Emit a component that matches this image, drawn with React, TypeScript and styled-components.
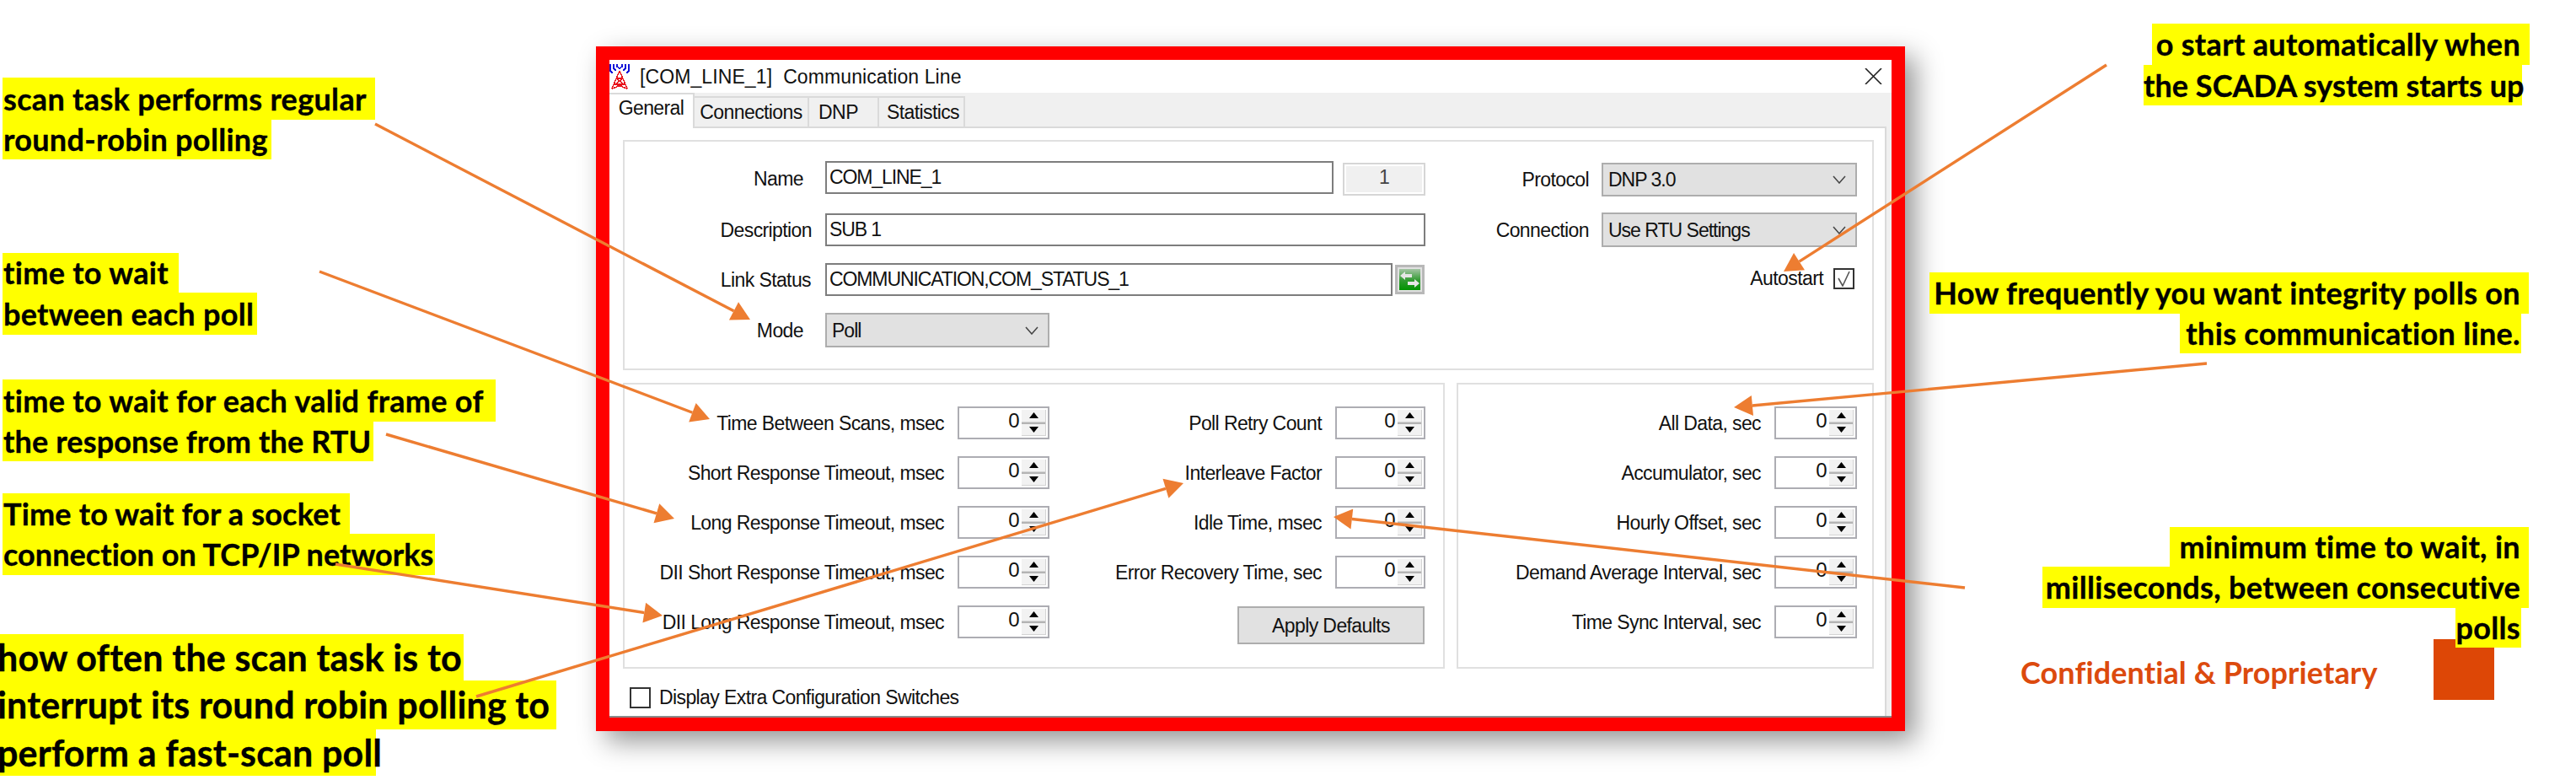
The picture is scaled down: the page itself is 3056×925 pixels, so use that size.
import React from 'react';
import styled, {createGlobalStyle} from 'styled-components';

const GlobalStyle = createGlobalStyle`
  html, body { margin: 0; padding: 0; background: #fff; }
  #root { width: 3056px; height: 925px; }
`;

const Slide = styled.div`
  position: relative;
  width: 3056px;
  height: 925px;
  overflow: hidden;
  background: #fff;
  display: grid;
  grid-template-columns: 707px 1553px 796px;
`;

const NotesColumn = styled.div<{$side: 'left' | 'right'}>`
  position: relative;
  display: flex;
  flex-direction: column;
  align-items: ${p => (p.$side === 'left' ? 'flex-start' : 'flex-end')};
  padding-right: ${p => (p.$side === 'left' ? 0 : 55)}px;
`;

const Note = styled.div<{$top: number}>`
  position: relative;
  z-index: 1;
  margin-top: ${p => p.$top}px;
  display: flex;
  flex-direction: column;
  align-items: inherit;
  align-self: stretch;
`;

const NoteLine = styled.div<{$w: number; $h: number; $side: 'left' | 'right'; $size: number; $pad: number; $inset?: number; $track: number}>`
  box-sizing: border-box;
  width: ${p => p.$w}px;
  height: ${p => p.$h}px;
  margin-left: ${p => (p.$side === 'left' ? p.$inset ?? 3 : 0)}px;
  margin-right: ${p => (p.$side === 'right' ? p.$inset ?? 0 : 0)}px;
  text-indent: ${p => (p.$side === 'left' ? p.$pad : 0)}px;
  padding-right: ${p => (p.$side === 'right' ? p.$pad : 0)}px;
  background: #ffff00;
  color: #000;
  font: 700 ${p => p.$size}px/${p => p.$h}px Lato, "Liberation Sans", sans-serif;
  letter-spacing: ${p => p.$track}px;
  -webkit-text-stroke: 0.35px #000;
  text-align: ${p => p.$side};
  white-space: nowrap;
`;

const Footer = styled.div`
  align-self: flex-start;
  margin: 9px 0 0 137px;
  color: #dc4a0e;
  font: 700 36px/40px Lato, "Liberation Sans", sans-serif;
  letter-spacing: 0.1px;
  white-space: nowrap;
`;

const Square = styled.div`
  position: absolute;
  left: 627px;
  top: 758px;
  width: 72px;
  height: 72px;
  background: #dd4706;
`;

const Dialog = styled.div`
  box-sizing: border-box;
  margin-top: 55px;
  width: 1553px;
  height: 812px;
  border: 16px solid #ff0000;
  background: #f0f0f0;
  box-shadow: 12px 12px 30px rgba(0, 0, 0, 0.42);
  display: flex;
  flex-direction: column;
  color: #111;
  font: 400 23px/26px "Liberation Sans", Arial, sans-serif;
  letter-spacing: -0.6px;
  white-space: nowrap;
`;

const TitleBar = styled.div`
  flex: none;
  height: 39px;
  background: #fff;
  display: flex;
  align-items: center;
  position: relative;
`;

const TitleText = styled.span`
  margin-left: 12px;
  white-space: pre;
  letter-spacing: 0.1px;
`;

const CloseIcon = styled.svg`
  margin-left: auto;
  margin-right: 11px;
  width: 21px;
  height: 19px;
`;

const TabStrip = styled.div`
  flex: none;
  height: 40px;
  display: flex;
  align-items: flex-end;
`;

const Tab = styled.div<{$active?: boolean; $w: number; $nudge?: number}>`
  box-sizing: border-box;
  width: ${p => p.$w}px;
  height: ${p => (p.$active ? 42 : 36)}px;
  margin-bottom: ${p => (p.$active ? -2 : 0)}px;
  padding-bottom: ${p => (p.$active ? 8 : 0)}px;
  padding-left: ${p => (p.$nudge && p.$nudge > 0 ? p.$nudge : 0)}px;
  padding-right: ${p => (p.$nudge && p.$nudge < 0 ? -p.$nudge : 0)}px;
  position: relative;
  z-index: ${p => (p.$active ? 2 : 0)};
  display: flex;
  align-items: center;
  justify-content: center;
  background: ${p => (p.$active ? '#fff' : '#f0f0f0')};
  border-top: 2px solid #dadada;
  border-right: 2px solid #dadada;
`;

const TabPanel = styled.div`
  box-sizing: border-box;
  flex: 1;
  width: 1515px;
  background: #fff;
  border-top: 2px solid #dadada;
  border-right: 2px solid #dadada;
  padding: 14px 13px 0 16px;
  display: flex;
  flex-direction: column;
  gap: 15px;
  position: relative;
`;

const BottomEdge = styled.div`
  flex: none;
  height: 2px;
  background: #8a8a8a;
`;

const Group = styled.div`
  box-sizing: border-box;
  border: 2px solid #e0e0e0;
`;

const GeneralGroup = styled(Group)`
  height: 273px;
  padding: 23px 18px 0 0;
  display: flex;
`;

const FieldStack = styled.div`
  width: 950px;
  flex: none;
  display: flex;
  flex-direction: column;
`;

const FieldRow = styled.div<{$top?: number}>`
  display: flex;
  margin-top: ${p => p.$top ?? 0}px;
`;

const FieldLabel = styled.div<{$offset: number}>`
  box-sizing: border-box;
  width: 238px;
  padding-right: ${p => p.$offset}px;
  text-align: right;
  align-self: center;
`;

const TextField = styled.div<{$w: number}>`
  box-sizing: border-box;
  width: ${p => p.$w}px;
  height: 39px;
  border: 2px solid #7d7d7d;
  background: #fff;
  padding: 4px 3px 0;
  letter-spacing: -1.1px;
`;

const IdBox = styled.div`
  box-sizing: border-box;
  width: 98px;
  height: 39px;
  margin: 2px 0 0 11px;
  border: 2px solid #d6d6d6;
  outline: 2px solid #fff;
  outline-offset: -4px;
  background: #f0f0f0;
  color: #444;
  text-align: center;
  line-height: 30px;
`;

const LinkButton = styled.div`
  box-sizing: border-box;
  width: 35px;
  height: 35px;
  margin: 2px 0 0 3px;
  border: 3px solid #b8b8b8;
  background: #e1e1e1;
  padding: 2px;
  display: flex;
`;

const LinkIcon = styled.svg`
  width: 25px;
  height: 25px;
`;

const Combo = styled.div<{$w: number; $h?: number}>`
  box-sizing: border-box;
  width: ${p => p.$w}px;
  height: ${p => p.$h ?? 41}px;
  border: 2px solid #adadad;
  background: #e1e1e1;
  padding: 0 11px 0 6px;
  display: flex;
  align-items: center;
  justify-content: space-between;
  letter-spacing: -1px;
`;

const Chevron = styled.svg`
  width: 16px;
  height: 10px;
`;

const SideStack = styled.div`
  flex: 1;
  padding-top: 2px;
  display: flex;
  flex-direction: column;
  align-items: flex-end;
`;

const SideRow = styled.div<{$top?: number; $right?: number; $gap?: number}>`
  display: flex;
  align-items: center;
  gap: ${p => p.$gap ?? 15}px;
  margin-top: ${p => p.$top ?? 0}px;
  margin-right: ${p => p.$right ?? 0}px;
`;

const CheckBox = styled.div`
  box-sizing: border-box;
  width: 25px;
  height: 25px;
  border: 2px solid #333;
  background: #fff;
  display: flex;
  align-items: center;
  justify-content: center;
`;

const TimingRow = styled.div`
  display: flex;
  gap: 14px;
  height: 339px;
`;

const TimingGroup = styled(Group)<{$w: number; $right: number}>`
  flex: none;
  width: ${p => p.$w}px;
  padding: 26px ${p => p.$right}px 0 0;
  display: flex;
`;

const SpinColumn = styled.div<{$w?: number}>`
  ${p => (p.$w ? `width: ${p.$w}px; flex: none;` : 'flex: 1;')}
  display: flex;
  flex-direction: column;
  align-items: flex-end;
  gap: 20px;
`;

const SpinRow = styled.div`
  height: 39px;
  display: flex;
  align-items: center;
  gap: 16px;
`;

const Spin = styled.div<{$w: number}>`
  box-sizing: border-box;
  width: ${p => p.$w}px;
  height: 39px;
  border: 2px solid #adadb3;
  background: #fff;
  display: flex;
  padding: 2px;
`;

const SpinValue = styled.div`
  flex: 1;
  text-align: right;
  padding-right: 3px;
  line-height: 26px;
  font-size: 24px;
`;

const SpinButtons = styled.div`
  width: 28px;
  display: flex;
  flex-direction: column;
  gap: 2px;
  background: #b4b4b4;
  border-right: 1px solid #d4d4d4;
`;

const SpinButton = styled.div`
  flex: 1;
  background: #f2f2f2;
  border-bottom: 1px solid #d4d4d4;
  display: flex;
  align-items: center;
  justify-content: center;
`;

const Triangle = styled.svg`
  width: 11px;
  height: 7px;
`;

const ApplyButton = styled.div`
  box-sizing: border-box;
  width: 222px;
  height: 45px;
  margin: 1px 1px 0 0;
  border: 2px solid #adadad;
  background: #e1e1e1;
  display: flex;
  align-items: center;
  justify-content: center;
`;

const ExtraRow = styled.div`
  margin: 6px 0 0 8px;
  display: flex;
  align-items: center;
  gap: 10px;
`;

const Overlay = styled.svg`
  position: absolute;
  left: 0;
  top: 0;
  z-index: 5;
  pointer-events: none;
`;

type NoteLineData = {text: string; w: number; h: number; pad: number; inset?: number; track?: number};
type NoteData = {top: number; size: number; track: number; lines: NoteLineData[]};

const leftNotes: NoteData[] = [
  {top: 92, size: 36, track: 0.32, lines: [
    {text: 'scan task performs regular', w: 442, h: 50, pad: 1},
    {text: 'round-robin polling', w: 319, h: 47, pad: 1},
  ]},
  {top: 111, size: 36, track: 0.32, lines: [
    {text: 'time to wait', w: 209, h: 47, pad: 1},
    {text: 'between each poll', w: 302, h: 50, pad: 1},
  ]},
  {top: 53, size: 36, track: 0.32, lines: [
    {text: 'time to wait for each valid frame of', w: 585, h: 50, pad: 1},
    {text: 'the response from the RTU', w: 440, h: 47, pad: 1, track: 0.15},
  ]},
  {top: 38, size: 36, track: 0.2, lines: [
    {text: 'Time to wait for a socket', w: 412, h: 48, pad: 1},
    {text: 'connection on TCP/IP networks', w: 513, h: 49, pad: 1, track: 0.05},
  ]},
  {top: 70, size: 43, track: 0.15, lines: [
    {text: 'how often the scan task is to', w: 550, h: 55, pad: -3, inset: 0},
    {text: 'interrupt its round robin polling to', w: 660, h: 58, pad: -3, inset: 0},
    {text: 'perform a fast-scan poll', w: 446, h: 55, pad: -3, inset: 0},
  ]},
];

const rightNotes: NoteData[] = [
  {top: 28, size: 36, track: 0.32, lines: [
    {text: 'o start automatically when', w: 448, h: 49, pad: 11},
    {text: 'the SCADA system starts up', w: 449, h: 48, pad: 2, inset: 9, track: 0.05},
  ]},
  {top: 198, size: 36, track: 0.32, lines: [
    {text: 'How frequently you want integrity polls on', w: 711, h: 49, pad: 10, inset: 1},
    {text: 'this communication line.', w: 405, h: 47, pad: 1, inset: 10},
  ]},
  {top: 206, size: 36, track: 0.32, lines: [
    {text: 'minimum time to wait, in', w: 426, h: 47, pad: 10, inset: 1},
    {text: 'milliseconds, between consecutive', w: 577, h: 49, pad: 10, inset: 1},
    {text: 'polls', w: 78, h: 47, pad: 1, inset: 10},
  ]},
];

const tabs = [
  {label: 'General', w: 101, active: true},
  {label: 'Connections', w: 136},
  {label: 'DNP', w: 83, nudge: -12},
  {label: 'Statistics', w: 102, nudge: 4},
];

const scanLabels = ['Time Between Scans, msec', 'Short Response Timeout, msec', 'Long Response Timeout, msec', 'DII Short Response Timeout, msec', 'DII Long Response Timeout, msec'];
const pollLabels = ['Poll Retry Count', 'Interleave Factor', 'Idle Time, msec', 'Error Recovery Time, sec'];
const integrityLabels = ['All Data, sec', 'Accumulator, sec', 'Hourly Offset, sec', 'Demand Average Interval, sec', 'Time Sync Interval, sec'];

const arrows = [
  [445, 147, 890, 379],
  [379, 322, 842, 497],
  [458, 515, 800, 615],
  [398, 669, 786, 730],
  [565, 826, 1404, 573],
  [2499, 77, 2116, 322],
  [2618, 431, 2057, 483],
  [2331, 697, 1582, 613],
];

const Arrow: React.FC<{x1: number; y1: number; x2: number; y2: number}> = ({x1, y1, x2, y2}) => {
  const len = Math.hypot(x2 - x1, y2 - y1);
  const ux = (x2 - x1) / len;
  const uy = (y2 - y1) / len;
  const bx = x2 - ux * 22;
  const by = y2 - uy * 22;
  const px = -uy * 12;
  const py = ux * 12;
  return (
    <g>
      <line x1={x1} y1={y1} x2={bx} y2={by} stroke="#ed7d31" strokeWidth={3.4} />
      <polygon points={`${x2},${y2} ${bx + px},${by + py} ${bx - px},${by - py}`} fill="#ed7d31" />
    </g>
  );
};

// blue signal arcs over a red lattice mast
const AntennaIcon = () => (
  <svg width="24" height="30" viewBox="0 0 24 30" shapeRendering="crispEdges" fill="none">
    <path d="M1 0v8l3 3M23 0v8l-3 3M5 0v5l3 3M19 0v5l-3 3M9 0v3l3 2 3-2V0" stroke="#1414d8" strokeWidth="1.5" />
    <path d="M12 8L3 29M12 8l9 21M8 17h8M5 24h14M8 17l9 7M16 17L7 24M3 29l14-5M21 29L7 24" stroke="#e8141c" strokeWidth="1.5" />
  </svg>
);

const ComboArrow = () => (
  <Chevron viewBox="0 0 16 10" fill="none">
    <path d="M1 1l7 8 7-8" stroke="#444" strokeWidth="1.5" />
  </Chevron>
);

const SpinBox: React.FC<{w: number}> = ({w}) => (
  <Spin $w={w}>
    <SpinValue>0</SpinValue>
    <SpinButtons>
      <SpinButton>
        <Triangle viewBox="0 0 11 7"><path d="M5.5 0L11 7H0z" fill="#000" /></Triangle>
      </SpinButton>
      <SpinButton>
        <Triangle viewBox="0 0 11 7"><path d="M0 0h11L5.5 7z" fill="#000" /></Triangle>
      </SpinButton>
    </SpinButtons>
  </Spin>
);

const renderNotes = (notes: NoteData[], side: 'left' | 'right') =>
  notes.map(note => (
    <Note key={note.lines[0].text} $top={note.top}>
      {note.lines.map(line => (
        <NoteLine
          key={line.text}
          $side={side}
          $w={line.w}
          $h={line.h}
          $pad={line.pad}
          $inset={side === 'right' ? line.inset ?? 0 : line.inset}
          $size={note.size}
          $track={line.track ?? note.track}
        >
          {line.text}
        </NoteLine>
      ))}
    </Note>
  ));

export default function App() {
  return (
    <>
      <GlobalStyle />
      <Slide>
        <NotesColumn $side="left">{renderNotes(leftNotes, 'left')}</NotesColumn>

        <Dialog>
          <TitleBar>
            <AntennaIcon />
            <TitleText>{'[COM_LINE_1]  Communication Line'}</TitleText>
            <CloseIcon viewBox="0 0 21 19" fill="none">
              <path d="M1 0l19 19M20 0L1 19" stroke="#222" strokeWidth="1.6" />
            </CloseIcon>
          </TitleBar>
          <TabStrip>
            {tabs.map(tab => (
              <Tab key={tab.label} $active={tab.active} $w={tab.w} $nudge={tab.nudge}>{tab.label}</Tab>
            ))}
          </TabStrip>
          <TabPanel>
            <GeneralGroup>
              <FieldStack>
                <FieldRow>
                  <FieldLabel $offset={26}>Name</FieldLabel>
                  <TextField $w={603}>COM_LINE_1</TextField>
                  <IdBox>1</IdBox>
                </FieldRow>
                <FieldRow $top={21}>
                  <FieldLabel $offset={16}>Description</FieldLabel>
                  <TextField $w={712}>SUB 1</TextField>
                </FieldRow>
                <FieldRow $top={20}>
                  <FieldLabel $offset={17}>Link Status</FieldLabel>
                  <TextField $w={673}>COMMUNICATION,COM_STATUS_1</TextField>
                  <LinkButton>
                    <LinkIcon viewBox="0 0 25 25">
                      <defs>
                        <linearGradient id="linkFill" x1="0" y1="0" x2="0" y2="1">
                          <stop offset="0" stopColor="#a4c4a4" />
                          <stop offset="0.55" stopColor="#2f9a2f" />
                          <stop offset="1" stopColor="#009400" />
                        </linearGradient>
                      </defs>
                      <rect width="25" height="25" fill="url(#linkFill)" />
                      <path d="M1 8l6-5v3h8v4H7v3zM24 17l-6 5v-3h-8v-4h8v-3z" fill="#e6e6e6" />
                    </LinkIcon>
                  </LinkButton>
                </FieldRow>
                <FieldRow $top={20}>
                  <FieldLabel $offset={26}>Mode</FieldLabel>
                  <Combo $w={266}>Poll<ComboArrow /></Combo>
                </FieldRow>
              </FieldStack>
              <SideStack>
                <SideRow>
                  <span>Protocol</span>
                  <Combo $w={303} $h={40}>DNP 3.0<ComboArrow /></Combo>
                </SideRow>
                <SideRow $top={19}>
                  <span>Connection</span>
                  <Combo $w={303}>Use RTU Settings<ComboArrow /></Combo>
                </SideRow>
                <SideRow $top={24} $right={3} $gap={12}>
                  <span>Autostart</span>
                  <CheckBox>
                    <svg width="17" height="19" viewBox="0 0 17 19" fill="none">
                      <path d="M2 9l5 9 8-17" stroke="#555" strokeWidth="1.6" />
                    </svg>
                  </CheckBox>
                </SideRow>
              </SideStack>
            </GeneralGroup>

            <TimingRow>
              <TimingGroup $w={975} $right={21}>
                <SpinColumn $w={504}>
                  {scanLabels.map(label => (
                    <SpinRow key={label}><span>{label}</span><SpinBox w={109} /></SpinRow>
                  ))}
                </SpinColumn>
                <SpinColumn>
                  {pollLabels.map(label => (
                    <SpinRow key={label}><span>{label}</span><SpinBox w={107} /></SpinRow>
                  ))}
                  <ApplyButton>Apply Defaults</ApplyButton>
                </SpinColumn>
              </TimingGroup>
              <TimingGroup $w={495} $right={18}>
                <SpinColumn>
                  {integrityLabels.map(label => (
                    <SpinRow key={label}><span>{label}</span><SpinBox w={98} /></SpinRow>
                  ))}
                </SpinColumn>
              </TimingGroup>
            </TimingRow>

            <ExtraRow>
              <CheckBox />
              <span>Display Extra Configuration Switches</span>
            </ExtraRow>
          </TabPanel>
          <BottomEdge />
        </Dialog>

        <NotesColumn $side="right">
          <Square />
          {renderNotes(rightNotes, 'right')}
          <Footer>{'Confidential & Proprietary'}</Footer>
        </NotesColumn>

        <Overlay width="3056" height="925">
          {arrows.map(([x1, y1, x2, y2]) => (
            <Arrow key={`${x1}-${y1}`} x1={x1} y1={y1} x2={x2} y2={y2} />
          ))}
        </Overlay>
      </Slide>
    </>
  );
}
